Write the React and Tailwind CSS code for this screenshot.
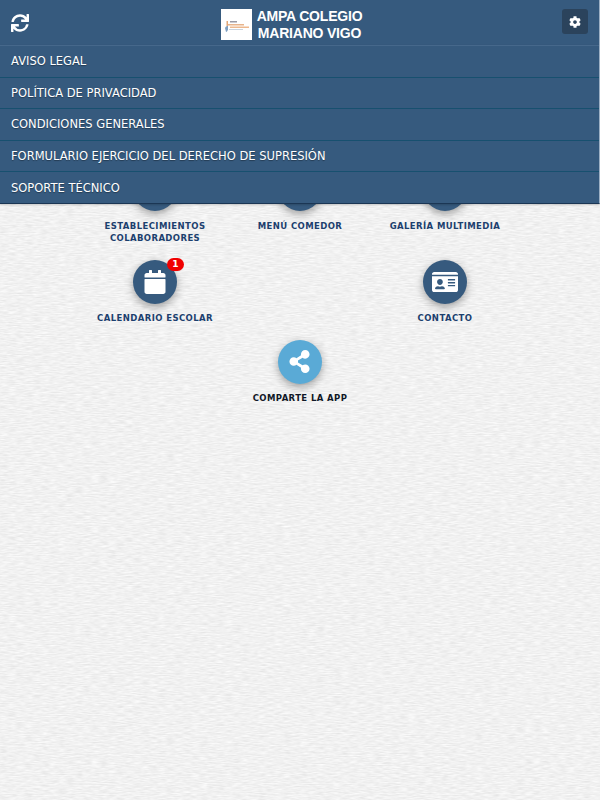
import { FaSync, FaCog, FaCalendar, FaIdCard, FaShareAlt, FaStore, FaUtensils, FaImages } from 'react-icons/fa';

const menuItems = [
  'AVISO LEGAL',
  'POLÍTICA DE PRIVACIDAD',
  'CONDICIONES GENERALES',
  'FORMULARIO EJERCICIO DEL DERECHO DE SUPRESIÓN',
  'SOPORTE TÉCNICO',
];

const Logo = () => (
  <div className="w-[31px] h-[31px] bg-white shrink-0">
    <svg width="31" height="31" viewBox="0 0 31 31">
      <rect x="9" y="12" width="7" height="1.5" fill="#9a9aa5" />
      <rect x="7" y="15" width="16" height="1.5" fill="#e8b48c" />
      <rect x="9" y="17.5" width="19" height="1.5" fill="#eeb98f" />
      <rect x="8" y="20" width="14" height="1" fill="#c9d3dd" />
      <path d="M4 19c1-2 2-2 3-2v4c-1 1-1 2-2 2z" fill="#7f9fc0" />
      <rect x="5.5" y="12" width="1.5" height="5" fill="#e3a878" />
    </svg>
  </div>
);

const MenuIcon = ({ icon: Icon, label, badge, light, iconSize = 23 }) => (
  <div className="flex flex-col items-center">
    <div className={`relative w-11 h-11 rounded-full flex items-center justify-center text-white shadow-[0_3px_8px_rgba(0,0,0,0.35)] ${light ? 'bg-[#5aaad6]' : 'bg-[#365a7e]'}`}>
      <Icon size={iconSize} />
      {badge && (
        <span className="absolute -top-[2px] -right-[7px] w-[17px] h-[13px] rounded-full bg-[#f00000] text-white text-[9px] leading-[13px] font-bold text-center">
          {badge}
        </span>
      )}
    </div>
    <p className={`mt-[8.5px] text-[8.5px] leading-[12.5px] font-bold tracking-[0.4px] text-center ${light ? 'text-[#111827]' : 'text-[#1c3f6e]'}`}>
      {label}
    </p>
  </div>
);

export default function App() {
  return (
    <div className="relative min-h-[800px] font-['DejaVu_Sans',sans-serif] bg-[#f1f1f1] bg-[url('data:image/svg+xml,%3Csvg%20xmlns=%27http://www.w3.org/2000/svg%27%20width=%27600%27%20height=%27800%27%3E%3Cfilter%20id=%27n%27%20color-interpolation-filters=%27sRGB%27%3E%3CfeTurbulence%20type=%27fractalNoise%27%20baseFrequency=%27.12%20.9%27%20numOctaves=%272%27%20seed=%273%27/%3E%3CfeColorMatrix%20values=%27.12%200%200%200%20.885%20.12%200%200%200%20.885%20.12%200%200%200%20.885%200%200%200%200%201%27/%3E%3C/filter%3E%3Crect%20width=%27600%27%20height=%27800%27%20filter=%27url(%23n)%27/%3E%3C/svg%3E')]">
      <header className="h-[45px] bg-[#365a7e] border-r border-[#9db0c4] flex items-center justify-between pl-[11px] pr-[11px]">
        <FaSync size={18} className="text-white" />
        <div className="flex items-center gap-[5px] mr-[8px] mt-[4px]">
          <Logo />
          <div className="font-['Liberation_Sans',sans-serif] font-bold text-white text-[14px] tracking-[-0.2px] leading-[16.5px] text-center">
            <div>AMPA COLEGIO</div>
            <div>MARIANO VIGO</div>
          </div>
        </div>
        <button className="w-[26px] h-[25px] mb-[2px] rounded-[3px] bg-[#2b435c] flex items-center justify-center text-white">
          <FaCog size={12} />
        </button>
      </header>

      <nav className="absolute z-10 top-[45px] left-0 right-0 h-[159px] flex flex-col bg-[#365a7e] border-b border-r border-b-[#1b3654] border-r-[#9db0c4] shadow-[0_1px_2px_rgba(0,0,0,0.2)]">
        {menuItems.map((item, i) => (
          <div
            key={item}
            className={`flex-1 flex items-center pl-[11px] pt-px text-white text-[11.5px] [text-shadow:0_1px_1px_rgba(0,0,0,0.35)] ${i === 0 ? 'border-t border-[#46688b]' : 'border-t border-[#17506f]'}`}
          >
            {item}
          </div>
        ))}
      </nav>

      <main className="pt-[122px] flex flex-col gap-[15px]">
        <div className="grid grid-cols-[145px_145px_145px] justify-center">
          <MenuIcon icon={FaStore} label={<>ESTABLECIMIENTOS<br />COLABORADORES</>} />
          <MenuIcon icon={FaUtensils} label="MENÚ COMEDOR" />
          <MenuIcon icon={FaImages} label="GALERÍA MULTIMEDIA" />
        </div>
        <div className="grid grid-cols-[145px_145px_145px] justify-center">
          <MenuIcon icon={FaCalendar} iconSize={24} label="CALENDARIO ESCOLAR" badge="1" />
          <div />
          <MenuIcon icon={FaIdCard} iconSize={26} label="CONTACTO" />
        </div>
        <div className="flex justify-center">
          <MenuIcon icon={FaShareAlt} label="COMPARTE LA APP" light />
        </div>
      </main>
    </div>
  );
}
